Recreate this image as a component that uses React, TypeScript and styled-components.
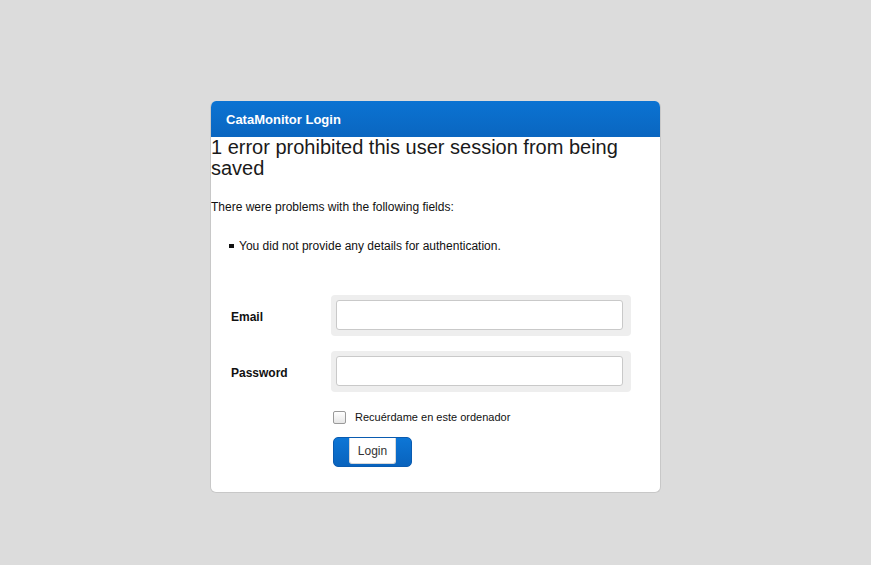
import React from 'react';
import styled, { createGlobalStyle } from 'styled-components';

const GlobalStyle = createGlobalStyle`
  html, body {
    margin: 0;
    padding: 0;
    background: #dcdcdc;
    font-family: "Liberation Sans", Arial, sans-serif;
    color: #111;
  }
`;

const Page = styled.div`
  min-height: 565px;
  padding-top: 101px;
  box-sizing: border-box;
  display: flex;
  justify-content: center;
  align-items: flex-start;
`;

const Card = styled.div`
  width: 451px;
  box-sizing: border-box;
  background: #fff;
  border: 1px solid #c8c8c8;
  border-top: none;
  border-radius: 6px;
  overflow: hidden;
`;

const Header = styled.div`
  height: 36px;
  display: flex;
  align-items: center;
  padding-left: 15px;
  background: linear-gradient(to bottom, #0b73d2, #0a66c0);
  color: #fff;
  font-weight: bold;
  font-size: 13px;
`;

const Body = styled.div`
  padding-bottom: 25px;
`;

const ErrorTitle = styled.h2`
  margin: 0;
  font-size: 20px;
  line-height: 21px;
  font-weight: normal;
  color: #1a1a1a;
`;

const ErrorIntro = styled.p`
  margin: 21px 0 0;
  font-size: 12px;
  line-height: 14px;
`;

const ErrorList = styled.ul`
  margin: 25px 0 0;
  padding: 0 0 0 18px;
  list-style: none;
`;

const ErrorItem = styled.li`
  display: flex;
  align-items: center;
  font-size: 12px;
  line-height: 14px;

  &::before {
    content: '';
    width: 5px;
    height: 4px;
    background: #111;
    margin-right: 5px;
  }
`;

const Form = styled.form`
  margin-top: 42px;
  padding-left: 20px;
  display: flex;
  flex-direction: column;
`;

const Row = styled.div`
  display: flex;
  align-items: center;
  margin-bottom: 15px;
`;

const Label = styled.label`
  width: 100px;
  font-size: 12px;
  font-weight: bold;
  padding-top: 2px;
`;

const FieldWrap = styled.div`
  width: 300px;
  box-sizing: border-box;
  padding: 5px 8px 6px 5px;
  background: #eeeeee;
  border-radius: 4px;
`;

const Input = styled.input`
  display: block;
  width: 287px;
  height: 30px;
  box-sizing: border-box;
  border: 1px solid #c9c9c9;
  border-radius: 3px;
  background: #fff;
  outline: none;
`;

const Actions = styled.div`
  padding-left: 102px;
  display: flex;
  flex-direction: column;
  align-items: flex-start;
`;

const RememberRow = styled.label`
  display: flex;
  align-items: center;
  font-size: 11px;
  margin-top: 2px;
  height: 16px;
`;

const Check = styled.span`
  width: 11px;
  height: 11px;
  border: 1px solid #9a9a9a;
  border-radius: 2px;
  background: linear-gradient(to bottom, #fff, #e6e6e6);
  margin-right: 9px;
`;

const LoginButton = styled.button`
  margin-top: 12px;
  width: 79px;
  height: 30px;
  padding: 0 0 2px;
  box-sizing: border-box;
  display: flex;
  justify-content: center;
  border: 1px solid #0a5bb0;
  border-radius: 5px;
  background: linear-gradient(to bottom, #0d76d6, #0963bd);
  cursor: pointer;
`;

const ButtonFace = styled.span`
  width: 47px;
  height: 100%;
  display: flex;
  align-items: center;
  justify-content: center;
  background: #fff;
  border: 1px solid #d8d8d8;
  border-top: none;
  box-sizing: border-box;
  border-radius: 0 0 3px 3px;
  font-family: "Liberation Sans", Arial, sans-serif;
  font-size: 12px;
  color: #333;
`;

export default function App() {
  return (
    <>
      <GlobalStyle />
      <Page>
        <Card>
          <Header>CataMonitor Login</Header>
          <Body>
            <ErrorTitle>1 error prohibited this user session from being saved</ErrorTitle>
            <ErrorIntro>There were problems with the following fields:</ErrorIntro>
            <ErrorList>
              <ErrorItem>You did not provide any details for authentication.</ErrorItem>
            </ErrorList>
            <Form onSubmit={(e) => e.preventDefault()}>
              <Row>
                <Label>Email</Label>
                <FieldWrap>
                  <Input type="text" />
                </FieldWrap>
              </Row>
              <Row>
                <Label>Password</Label>
                <FieldWrap>
                  <Input type="password" />
                </FieldWrap>
              </Row>
              <Actions>
                <RememberRow>
                  <Check />
                  Recuérdame en este ordenador
                </RememberRow>
                <LoginButton type="submit">
                  <ButtonFace>Login</ButtonFace>
                </LoginButton>
              </Actions>
            </Form>
          </Body>
        </Card>
      </Page>
    </>
  );
}
